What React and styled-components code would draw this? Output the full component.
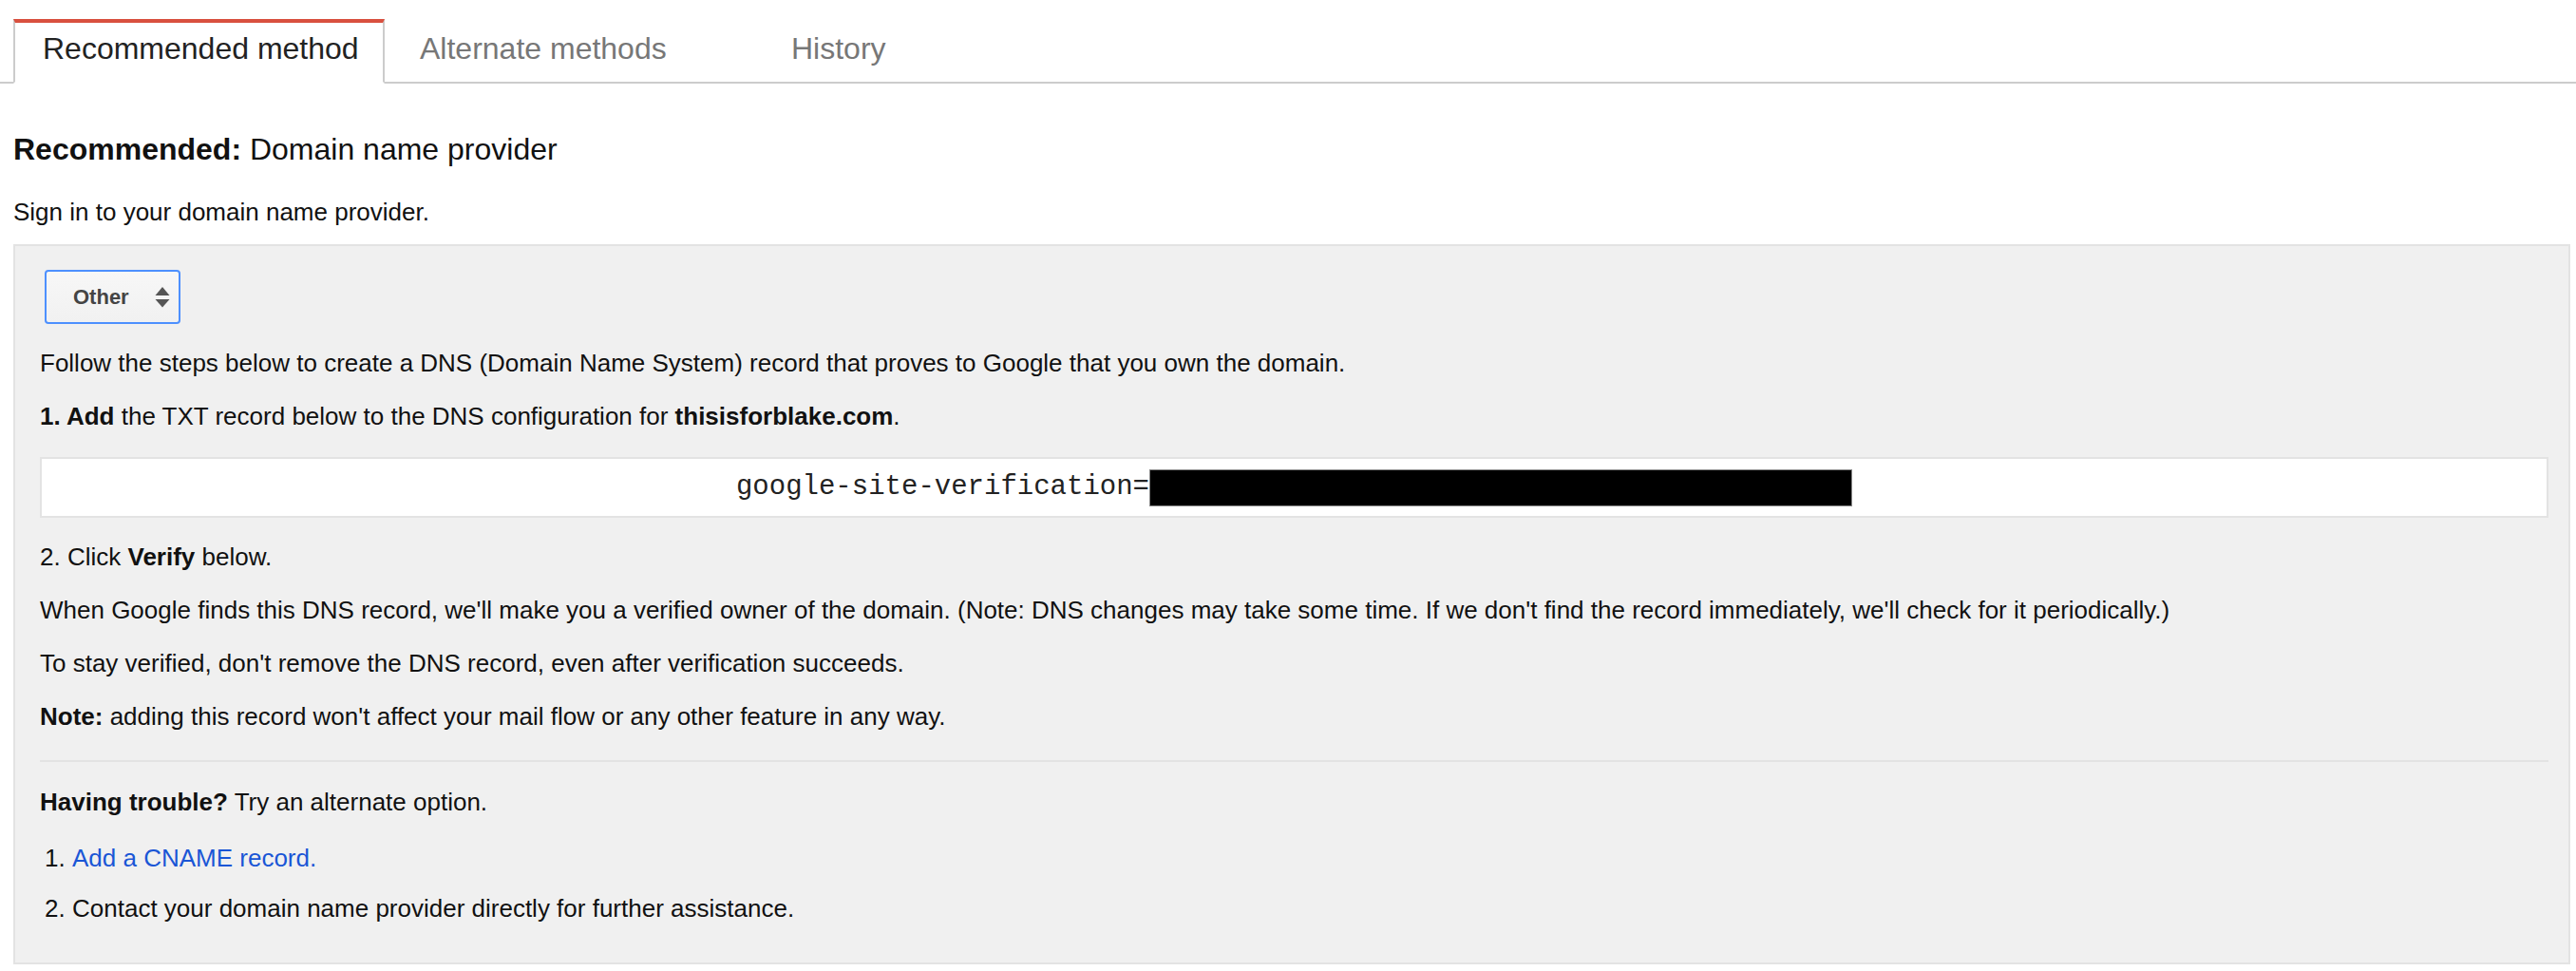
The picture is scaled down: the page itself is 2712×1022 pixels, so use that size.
import React from 'react'
import styled, { createGlobalStyle } from 'styled-components'

const GlobalStyle = createGlobalStyle`
  body {
    margin: 0;
    background: #fff;
    font-family: "Liberation Sans", Arial, sans-serif;
    color: #222;
  }
`

const tabs = ['Recommended method', 'Alternate methods', 'History']

export default function App() {
  const [active, setActive] = React.useState(0)

  return (
    <Page>
      <GlobalStyle />
      <TabBar>
        {tabs.map((label, i) => (
          <Tab key={label} $active={active === i} onClick={() => setActive(i)}>
            {label}
          </Tab>
        ))}
      </TabBar>

      <Content>
        <Heading>
          <b>Recommended:</b> Domain name provider
        </Heading>
        <Intro>Sign in to your domain name provider.</Intro>

        <Panel>
          <FakeSelect>
            Other
            <Arrows width="16" height="22" viewBox="0 0 16 22">
              <path d="M8 0 L15.5 9 L0.5 9 Z" fill="#555" />
              <path d="M0.5 13 L15.5 13 L8 21.5 Z" fill="#555" />
            </Arrows>
          </FakeSelect>

          <Para>
            Follow the steps below to create a DNS (Domain Name System) record that proves to Google that you own the domain.
          </Para>
          <Para>
            <b>1. Add</b> the TXT record below to the DNS configuration for <b>thisisforblake.com</b>.
          </Para>

          <CodeBox>
            google-site-verification=<Redacted />
          </CodeBox>

          <Para>
            2. Click <b>Verify</b> below.
          </Para>
          <Para>
            When Google finds this DNS record, we'll make you a verified owner of the domain. (Note: DNS changes may take some time. If we don't find the record immediately, we'll check for it periodically.)
          </Para>
          <Para>To stay verified, don't remove the DNS record, even after verification succeeds.</Para>
          <Para>
            <b>Note:</b> adding this record won't affect your mail flow or any other feature in any way.
          </Para>

          <Divider />

          <Para>
            <b>Having trouble?</b> Try an alternate option.
          </Para>
          <Steps>
            <li>
              <Link href="#">Add a CNAME record.</Link>
            </li>
            <li>Contact your domain name provider directly for further assistance.</li>
          </Steps>
        </Panel>
      </Content>
    </Page>
  )
}

const Page = styled.div`
  padding-top: 20px;
  font-family: "Liberation Sans", Arial, sans-serif;
`

const TabBar = styled.div`
  display: flex;
  padding-left: 14px;
  border-bottom: 2px solid #ccc;
`

const Tab = styled.div`
  box-sizing: border-box;
  width: 391px;
  height: 68px;
  margin-bottom: -2px;
  display: flex;
  align-items: center;
  padding: 0 0 8px ${p => (p.$active ? '29px' : '35px')};
  font-size: 32px;
  color: ${p => (p.$active ? '#222' : '#777')};
  background: ${p => (p.$active ? '#fff' : 'transparent')};
  cursor: pointer;
  border-top: 4px solid ${p => (p.$active ? '#d9503f' : 'transparent')};
  border-left: 2px solid ${p => (p.$active ? '#ccc' : 'transparent')};
  border-right: 2px solid ${p => (p.$active ? '#ccc' : 'transparent')};
  border-bottom: 2px solid ${p => (p.$active ? '#fff' : 'transparent')};
`

const Content = styled.div`
  padding: 0 6px 0 14px;
`

const Heading = styled.h2`
  margin: 49px 0 0;
  font-size: 32px;
  line-height: 40px;
  font-weight: normal;
  color: #111;
`

const Intro = styled.p`
  margin: 30px 0 18px;
  font-size: 26px;
  line-height: 32px;
  color: #111;
`

const Panel = styled.div`
  display: flex;
  flex-direction: column;
  align-items: stretch;
  gap: 24px;
  background: #f0f0f0;
  border: 2px solid #e3e3e3;
  padding: 25px 21px 41px 26px;
  font-size: 26px;
  line-height: 32px;
  color: #111;
`

const FakeSelect = styled.div`
  align-self: flex-start;
  box-sizing: border-box;
  position: relative;
  width: 143px;
  height: 57px;
  margin-left: 5px;
  margin-bottom: 1px;
  display: flex;
  align-items: center;
  padding-left: 28px;
  border: 2px solid #4d90fe;
  border-radius: 4px;
  background: linear-gradient(#f7f7f7, #f1f1f1);
  font-size: 22px;
  font-weight: bold;
  color: #444;
`

const Arrows = styled.svg`
  position: absolute;
  left: 114px;
  top: 16px;
`

const Para = styled.p`
  margin: 0;
`

const CodeBox = styled.div`
  box-sizing: border-box;
  height: 64px;
  margin: 3px 0 1px;
  display: flex;
  align-items: center;
  justify-content: center;
  background: #fff;
  border: 2px solid #e3e3e3;
  font-family: "Liberation Mono", "Courier New", monospace;
  font-size: 29px;
  color: #222;
  white-space: pre;
`

const Redacted = styled.span`
  display: inline-block;
  box-sizing: border-box;
  width: 740px;
  height: 39px;
  background: #000;
  border: 1px solid #888;
`

const Divider = styled.hr`
  margin: 6px 0 2px;
  border: 0;
  height: 2px;
  background: #e3e3e3;
`

const Steps = styled.ol`
  margin: 3px 0 0;
  padding-left: 34px;

  li + li {
    margin-top: 21px;
  }
`

const Link = styled.a`
  color: #1a56d6;
  text-decoration: none;
`
